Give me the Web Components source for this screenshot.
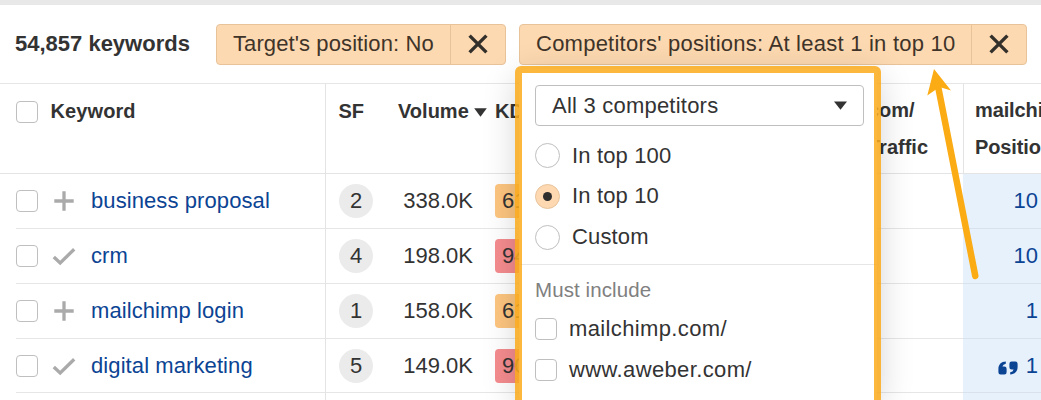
<!DOCTYPE html>
<html lang="en">
<head>
<meta charset="utf-8">
<title>Content gap</title>
<style>
    html, body {
        margin: 0;
        width: 1041px;
        height: 400px;
        overflow: hidden;
        background: #fff;
    }
    body {
        position: relative;
        font: 22px/26px "Liberation Sans", Arial, sans-serif;
        color: #333;
    }
</style>
</head>
<body>
<gap-page></gap-page>

<script>
// Base class: clones the template of the element into its shadow root
class BaseElement extends HTMLElement {
    constructor() {
        super();
        this.attachShadow({ mode: "open" });
    }

    connectedCallback() {
        const template = document.createElement("template");
        template.innerHTML = `<style>${this.styles()}</style>${this.markup()}`;
        this.shadowRoot.replaceChildren(template.content.cloneNode(true));
    }

    styles() { return ""; }
    markup() { return "<slot></slot>"; }
}

class CheckBox extends BaseElement {
    styles() {
        return `
        :host {
            display: block;
            flex: none;
            box-sizing: border-box;
            width: 22px;
            height: 22px;
            border: 1px solid #bfbfbf;
            border-radius: 4px;
            background: #fff;
        }`;
    }
    markup() { return ""; }
}

class RadioOption extends BaseElement {
    styles() {
        return `
        :host { display: flex; align-items: center; gap: 12px; height: 40.8px; }
        i {
            display: flex;
            align-items: center;
            justify-content: center;
            box-sizing: border-box;
            width: 25px;
            height: 25px;
            border: 1px solid #bfbfbf;
            border-radius: 50%;
        }
        :host([checked]) i { background: #fdd8b0; border-color: #e8c49c; }
        :host([checked]) i::after {
            content: "";
            width: 9px;
            height: 9px;
            border-radius: 50%;
            background: #2e2e2e;
        }
        span { letter-spacing: .15px; }`;
    }
    markup() { return `<i></i><span><slot></slot></span>`; }
}

class CheckOption extends BaseElement {
    styles() {
        return `
        :host { display: flex; align-items: center; gap: 12px; height: 40.8px; letter-spacing: .37px; }`;
    }
    markup() { return `<check-box></check-box><span><slot></slot></span>`; }
}

class FilterChip extends BaseElement {
    styles() {
        return `
        :host {
            display: flex;
            flex: none;
            box-sizing: border-box;
            height: 41px;
            border: 1px solid #e8c39a;
            border-radius: 4px;
            background: #fdd9b1;
            color: #3f3429;
            white-space: nowrap;
        }
        .label { display: flex; align-items: center; flex: 1; padding-left: 16px; }
        .close {
            display: flex;
            align-items: center;
            justify-content: center;
            width: 54px;
            border-left: 1px solid #e8c39a;
        }`;
    }
    markup() {
        return `
        <div class="label"><span><slot></slot></span></div>
        <div class="close">
            <svg width="20" height="20" viewBox="0 0 20 20" fill="none" stroke="#33302c" stroke-width="3.4">
                <path d="M1.6 1.6 18.4 18.4M18.4 1.6 1.6 18.4"/>
            </svg>
        </div>`;
    }
}

class FilterBar extends BaseElement {
    styles() {
        return `
        :host {
            display: flex;
            align-items: center;
            box-sizing: border-box;
            height: 84px;
            padding-left: 15px;
            border-top: 5px solid #e8e8e8;
            border-bottom: 1px solid #e6e6e6;
        }
        b { width: 201px; white-space: nowrap; color: #333; }
        .chips { display: flex; gap: 13px; }
        .target { width: 290px; letter-spacing: .1px; }
        .competitors { width: 508px; letter-spacing: .24px; }`;
    }
    markup() {
        return `
        <b>54,857 keywords</b>
        <div class="chips">
            <filter-chip class="target">Target's position: No</filter-chip>
            <filter-chip class="competitors">Competitors' positions: At least 1 in top 10</filter-chip>
        </div>`;
    }
}

const COLUMNS = "326px 60px 87px 76px 414px 78px";

class TableHead extends BaseElement {
    styles() {
        return `
        :host {
            display: grid;
            grid-template-columns: ${COLUMNS};
            box-sizing: border-box;
            height: 90px;
            border-bottom: 1px solid #e4e4e4;
            font-size: 20px;
            font-weight: bold;
            line-height: 37px;
            white-space: nowrap;
        }
        .keyword { display: flex; gap: 12.5px; padding: 9px 0 0 16px; border-right: 1px solid #e4e4e4; letter-spacing: .1px; }
        check-box { margin-top: 7.5px; }
        .sf { padding: 9px 0 0 12.5px; }
        .volume { display: flex; align-items: flex-start; gap: 5px; padding: 9px 0 0 12px; }
        .volume svg { flex: none; margin-top: 15px; }
        .kd { padding: 9px 0 0 22px; }
        .traffic { display: flex; flex-direction: column; padding: 8px 0 0 319px; }
        .position { display: flex; flex-direction: column; padding: 8px 0 0 11px; border-left: 1px solid #e4e4e4; letter-spacing: -.12px; }`;
    }
    markup() {
        return `
        <div class="keyword"><check-box></check-box><span>Keyword</span></div>
        <div class="sf">SF</div>
        <div class="volume"><span>Volume</span>
            <svg width="13" height="9" viewBox="0 0 13 9"><path d="M.2 .3h12.6L6.5 8.7z" fill="#333"/></svg>
        </div>
        <div class="kd">KD</div>
        <div class="traffic"><span>com/</span><span>Traffic</span></div>
        <div class="position"><span>mailchi</span><span>Positio</span></div>`;
    }
}

const MARKS = {
    plus: `<path d="M12 2.3v19.4M2.3 12h19.4"/>`,
    check: `<path d="M1.8 13 8.2 19 22.2 5.2"/>`
};

class KeywordRow extends BaseElement {
    styles() {
        return `
        :host {
            display: grid;
            grid-template-columns: ${COLUMNS};
            height: 54.8px;
        }
        :host > div, .cell {
            display: flex;
            align-items: center;
            box-sizing: border-box;
            border-bottom: 1px solid #e6e6e6;
        }
        .keyword { padding-left: 16px; border-right: 1px solid #e4e4e4; }
        :host > .keyword { border-bottom: 0; }
        .keyword .cell { flex: 1; height: 100%; }
        .keyword svg { margin: 0 15px 0 14px; }
        a { color: #0c4494; letter-spacing: .09px; white-space: nowrap; }
        .sf { padding-left: 13px; }
        .sf i {
            display: flex;
            align-items: center;
            justify-content: center;
            width: 34px;
            height: 34px;
            border-radius: 50%;
            background: #ebebeb;
            font-style: normal;
        }
        .volume { justify-content: flex-end; }
        .kd { padding-left: 22px; }
        .kd i {
            box-sizing: border-box;
            width: 50px;
            height: 34px;
            padding: 4px 0 0 7px;
            border-radius: 4px;
            background: #fdc57f;
            font-style: normal;
        }
        :host([level="hard"]) .kd i { background: #f58c8f; }
        .position {
            justify-content: flex-end;
            gap: 8px;
            padding-right: 3px;
            background: #e6f1fc;
            color: #0c4494;
            border-color: #d9e2ec !important;
        }
        .position svg { margin-top: 4px; }`;
    }
    markup() {
        const quote = `
            <svg width="20" height="14" viewBox="0 0 20 14" fill="#0c4494">
                <path d="M7.8 .6C3.2 .6 .4 3.6 .4 8v3.2Q.4 13.4 2.6 13.4h3.8Q8.6 13.4 8.6 11.2V7.8Q8.6 5.6 6.4 5.6H4.4Q5 3.2 7.8 2.8z"/>
                <path d="M12.2 13.4c4.6 0 7.4-3 7.4-7.4V2.8Q19.6 .6 17.4 .6h-3.8Q11.4 .6 11.4 2.8v3.4q0 2.2 2.2 2.2h2q-.6 2.4-3.4 2.8z"/>
            </svg>`;
        const d = this.dataset;
        return `
        <div class="keyword"><div class="cell">
            <check-box></check-box>
            <svg width="24" height="24" viewBox="0 0 24 24" fill="none" stroke="#aaa" stroke-width="3.3">${MARKS[d.mark]}</svg>
            <a><slot></slot></a>
        </div></div>
        <div class="sf"><i>${d.sf}</i></div>
        <div class="volume">${d.volume}</div>
        <div class="kd"><i>${d.kd}</i></div>
        <div></div>
        <div class="position">${this.hasAttribute("snippet") ? quote : ""}<span>${d.position}</span></div>`;
    }
}

class KeywordTable extends BaseElement {
    styles() {
        return `
        :host { display: block; }
        .gap { padding-top: .3px; }
        .rest { display: grid; grid-template-columns: 326px 637px 78px; height: 6.4px; }
        .rest :first-child { border-right: 1px solid #e4e4e4; }
        .rest :last-child { background: #e6f1fc; }`;
    }
    markup() {
        return `
        <table-head></table-head>
        <keyword-row data-mark="plus" data-sf="2" data-volume="338.0K" data-kd="61" data-position="10">business proposal</keyword-row>
        <keyword-row data-mark="check" data-sf="4" data-volume="198.0K" data-kd="94" data-position="10" level="hard">crm</keyword-row>
        <keyword-row class="gap" data-mark="plus" data-sf="1" data-volume="158.0K" data-kd="61" data-position="1">mailchimp login</keyword-row>
        <keyword-row data-mark="check" data-sf="5" data-volume="149.0K" data-kd="90" data-position="1" level="hard" snippet>digital marketing</keyword-row>
        <div class="rest"><div></div><div></div><div></div></div>`;
    }
}

class CompetitorsMenu extends BaseElement {
    styles() {
        return `
        :host {
            display: block;
            position: absolute;
            left: 519px;
            top: 69px;
            box-sizing: border-box;
            width: 358px;
            height: 331px;
            background: #fff;
            box-shadow: 0 8px 34px rgba(0, 0, 0, .2);
        }
        /* highlight frame round the menu, open at the bottom */
        :host::after {
            content: "";
            position: absolute;
            inset: -3px -4px 0;
            border: 7px solid rgba(252, 172, 30, .86);
            border-bottom: 0;
            border-radius: 6px 6px 0 0;
        }
        .body { box-sizing: border-box; height: 100%; padding-top: 16px; overflow: hidden; }
        .select {
            display: flex;
            align-items: center;
            justify-content: space-between;
            box-sizing: border-box;
            height: 41px;
            margin: 0 13px 9.3px 16px;
            padding: 0 16px;
            border: 1px solid #bfbfbf;
            border-radius: 4px;
            letter-spacing: .22px;
        }
        .radios { padding: 0 16px 6.3px; border-bottom: 1px solid #e6e6e6; }
        .list { padding: 0 16px; }
        h4 { margin: 0; padding: 12px 0 5.8px; font-size: 20.5px; font-weight: normal; letter-spacing: .1px; color: #808080; }`;
    }
    markup() {
        return `
        <div class="body">
            <div class="select"><span>All 3 competitors</span>
                <svg width="13" height="9" viewBox="0 0 13 9"><path d="M0 .5h13L6.5 8.7z" fill="#333"/></svg>
            </div>
            <div class="radios">
                <radio-option>In top 100</radio-option>
                <radio-option checked>In top 10</radio-option>
                <radio-option>Custom</radio-option>
            </div>
            <div class="list">
                <h4>Must include</h4>
                <check-option>mailchimp.com/</check-option>
                <check-option>www.aweber.com/</check-option>
                <check-option></check-option>
            </div>
        </div>`;
    }
}

class PointerArrow extends BaseElement {
    styles() {
        return `
        :host { display: block; position: absolute; left: 920px; top: 64px; }
        svg { display: block; }`;
    }
    markup() {
        return `
        <svg width="64" height="220" viewBox="0 0 64 220">
            <path d="M18 22 55.3 212" stroke="#fbab14" stroke-width="6.5" stroke-linecap="round" fill="none"/>
            <path d="M14 5 31 26.5 19.5 23 7.3 31.5z" fill="#fbab14"/>
        </svg>`;
    }
}

class GapPage extends BaseElement {
    styles() {
        return `:host { display: block; width: 1041px; height: 400px; overflow: hidden; }`;
    }
    markup() {
        return `
        <filter-bar></filter-bar>
        <keyword-table></keyword-table>
        <competitors-menu></competitors-menu>
        <pointer-arrow></pointer-arrow>`;
    }
}

customElements.define("check-box", CheckBox);
customElements.define("radio-option", RadioOption);
customElements.define("check-option", CheckOption);
customElements.define("filter-chip", FilterChip);
customElements.define("filter-bar", FilterBar);
customElements.define("table-head", TableHead);
customElements.define("keyword-row", KeywordRow);
customElements.define("keyword-table", KeywordTable);
customElements.define("competitors-menu", CompetitorsMenu);
customElements.define("pointer-arrow", PointerArrow);
customElements.define("gap-page", GapPage);
</script>
</body>
</html>
